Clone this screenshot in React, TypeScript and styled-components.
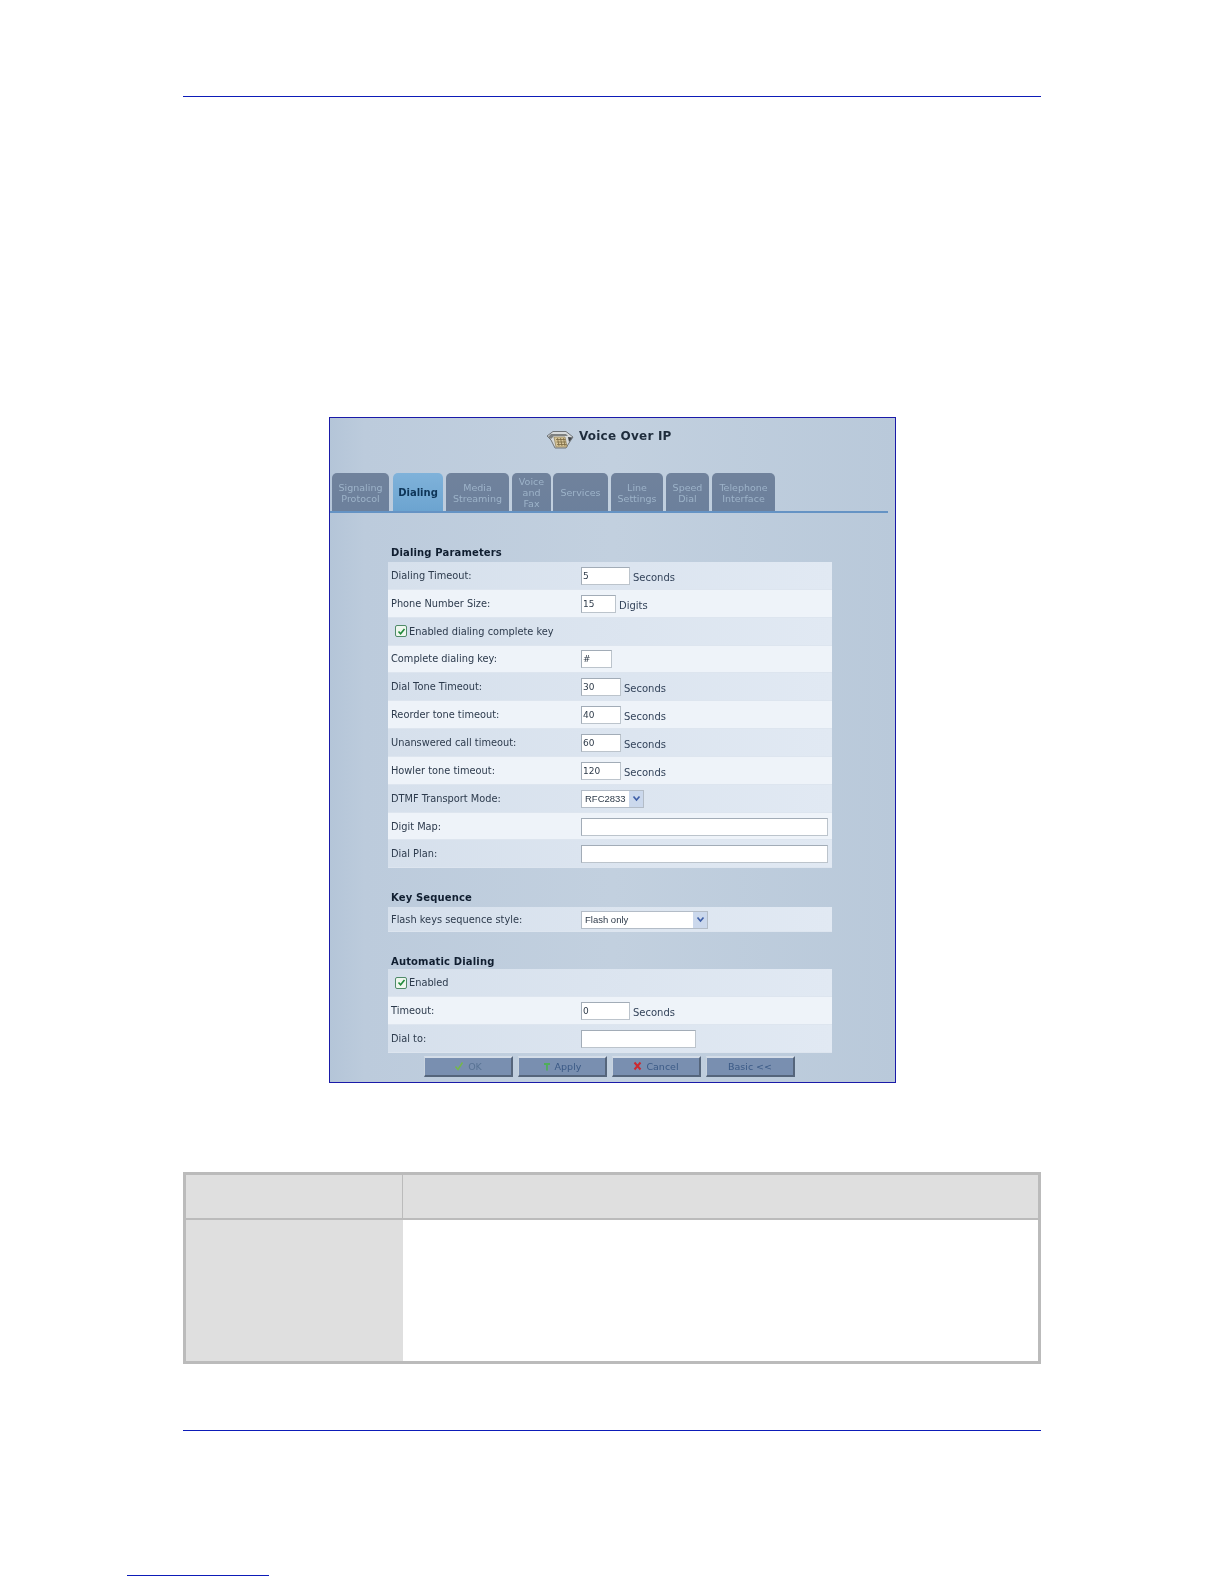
import React from "react";
import styled, { createGlobalStyle } from "styled-components";

const Global = createGlobalStyle`
  html, body { margin: 0; padding: 0; background: #fff; }
  body { font-family: "DejaVu Sans", Verdana, sans-serif; }
`;

const Page = styled.div`
  width: 1224px;
  height: 1584px;
  position: relative;
  overflow: hidden;
  padding-top: 96px;
  box-sizing: border-box;
`;

const Rule = styled.div`
  height: 1px;
  width: 858px;
  margin-left: 183px;
  background: #0d1cb8;
`;

const Frame = styled.div`
  box-sizing: border-box;
  width: 567px;
  height: 666px;
  margin: 320px 0 0 329px;
  border: 1px solid #1a1aa8;
  background: linear-gradient(90deg, #b4c5d8 0%, #bccbdc 6%, #c2d0df 50%, #b9c9da 100%);
  display: flex;
  flex-direction: column;
`;

const Blur = styled.div`
  filter: blur(0.45px);
  display: flex;
  flex-direction: column;
  height: 100%;
`;

const TitleRow = styled.div`
  height: 55px;
  padding-left: 216px;
  box-sizing: border-box;
  padding-top: 4px;
  display: flex;
  align-items: flex-start;
  gap: 5px;
`;

const TitleIcon = styled.svg`
  width: 28px;
  height: 19px;
  margin-top: 8px;
`;

const TitleText = styled.span`
  font-size: 12px;
  font-weight: 700;
  color: #1e2c3c;
  line-height: 28px;
  letter-spacing: 0.2px;
`;

const TabStrip = styled.div`
  width: 558px;
  height: 40px;
  box-sizing: border-box;
  padding-left: 2px;
  display: flex;
  border-bottom: 2px solid #6593c4;
`;

const Tab = styled.div<{ $w: number; $gap: number; $active?: boolean }>`
  width: ${(p) => p.$w}px;
  margin-right: ${(p) => p.$gap}px;
  height: 38px;
  box-sizing: border-box;
  padding-top: 1px;
  border-radius: 5px 5px 0 0;
  background: ${(p) => (p.$active ? "linear-gradient(#7fb2da, #6ca4d0)" : "linear-gradient(#70829c, #6c809c)")};
  color: ${(p) => (p.$active ? "#0e3558" : "#9db3c9")};
  font-size: ${(p) => (p.$active ? 10 : 9.5)}px;
  font-weight: ${(p) => (p.$active ? 700 : 400)};
  line-height: 11px;
  text-align: center;
  display: flex;
  align-items: center;
  justify-content: center;
  overflow: hidden;
`;

const Content = styled.div`
  padding-left: 58px;
  width: 444px;
  display: flex;
  flex-direction: column;
`;

const Heading = styled.div<{ $h: number; $pb?: number }>`
  height: ${(p) => p.$h}px;
  box-sizing: border-box;
  padding: 0 0 ${(p) => p.$pb ?? 3}px 3px;
  display: flex;
  align-items: flex-end;
  font-size: 10px;
  font-weight: 700;
  color: #101e30;
  line-height: 12px;
  letter-spacing: 0.15px;
`;

const Row = styled.div<{ $alt?: boolean; $h?: number }>`
  height: ${(p) => p.$h ?? 27.85}px;
  box-sizing: border-box;
  display: flex;
  align-items: center;
  padding-left: 3px;
  background: ${(p) => (p.$alt ? "linear-gradient(90deg, #d6e0ec, #e1e9f3)" : "#eef3f9")};
  border-bottom: 1px solid #dde5ef;
`;

const Label = styled.div`
  width: 190px;
  font-size: 9.8px;
  color: #2c3a4c;
`;

const Field = styled.div<{ $w: number }>`
  width: ${(p) => p.$w}px;
  height: 18px;
  margin-top: 1px;
  box-sizing: border-box;
  background: #fff;
  border: 1px solid #a2acb7;
  border-right-color: #bcc4cc;
  border-bottom-color: #bcc4cc;
  padding-left: 1px;
  font-size: 9px;
  line-height: 16px;
  color: #2e3b4a;
`;

const Unit = styled.span`
  font-size: 10px;
  color: #33435a;
  margin: 4px 0 0 3px;
`;

const SelectBox = styled.div<{ $w: number }>`
  width: ${(p) => p.$w}px;
  height: 18px;
  margin-top: 1px;
  box-sizing: border-box;
  background: #fff;
  border: 1px solid #b3bcc7;
  padding-left: 3px;
  font-family: "Liberation Sans", Arial, sans-serif;
  font-size: 9.5px;
  line-height: 16px;
  color: #2e3b4a;
  display: flex;
  justify-content: space-between;
  align-items: center;
`;

const SelectArrow = styled.span`
  width: 14px;
  height: 16px;
  background: #cbd8ec;
  display: flex;
  align-items: center;
  justify-content: center;
`;

const CheckLabel = styled.div`
  display: flex;
  align-items: center;
  gap: 2px;
  padding-left: 4px;
  font-size: 9.8px;
  color: #2c3a4c;
`;

const Check = styled.span`
  width: 12px;
  height: 12px;
  box-sizing: border-box;
  border: 1px solid #4f8a68;
  border-radius: 2px;
  background: #eef6ee;
  display: flex;
  align-items: center;
  justify-content: center;
`;

const ButtonBar = styled.div`
  display: flex;
  gap: 5px;
  padding: 3px 0 0 94px;
`;

const Button = styled.div<{ $light?: boolean }>`
  width: 89px;
  height: 21px;
  box-sizing: border-box;
  background: #798fb0;
  border-top: 2px solid #d4dde8;
  border-left: 1px solid #c8d3df;
  border-right: 2px solid #55657b;
  border-bottom: 2px solid #55657b;
  color: ${(p) => (p.$light ? "#587394" : "#3b5a86")};
  font-size: 9.5px;
  display: flex;
  align-items: center;
  justify-content: center;
  gap: 4px;
`;

const InfoTable = styled.div`
  box-sizing: border-box;
  width: 858px;
  height: 192px;
  margin: 89px 0 0 183px;
  border: 3px solid #bbbbbb;
  display: grid;
  grid-template-columns: 217px 1fr;
  grid-template-rows: 45px 1fr;
`;

const HeadCell = styled.div<{ $first?: boolean }>`
  background: #dfdfdf;
  border-bottom: 2px solid #bbbbbb;
  border-right: ${(p) => (p.$first ? "1px solid #bbbbbb" : "none")};
`;

const SideCell = styled.div`
  background: #dfdfdf;
`;

const BodyCell = styled.div`
  background: #fff;
`;

const BottomRule = styled(Rule)`
  margin-top: 66px;
`;

const Footnote = styled.div`
  height: 1px;
  width: 142px;
  margin: 144px 0 0 127px;
  background: #0d1cb8;
`;

const PhoneIcon = () => (
  <TitleIcon viewBox="0 0 28 19">
    <path d="M1 6 L7 1.5 H20 L27 7 L23 13 L20 18 H9 L5 10 Z" fill="#d7dadb" stroke="#6f7478" strokeWidth="1" />
    <path d="M5 4 H20 L22 6 H8 L5 9 L2 7 Z" fill="#7f8282" />
    <path d="M8 7 H19 L21 17 H10 Z" fill="#d8c69a" stroke="#8c7c54" strokeWidth="0.7" />
    <path d="M10 9.5 H19.5 M10.5 12 H20 M11 14.5 H20.5 M11.5 8 L13 16 M14.5 8 L16 16 M17.5 8 L19 16" stroke="#7b6a42" strokeWidth="0.8" />
    <path d="M22 7 L26.5 7.5 L23 12 Z" fill="#3f444a" />
  </TitleIcon>
);

const CheckMark = () => (
  <svg width="9" height="9" viewBox="0 0 9 9">
    <path d="M1.5 4.5 L3.6 6.8 L7.5 2" fill="none" stroke="#1f8a3a" strokeWidth="1.6" />
  </svg>
);

const Arrow = () => (
  <svg width="9" height="7" viewBox="0 0 9 7">
    <path d="M1.5 1.5 L4.5 5 L7.5 1.5" fill="none" stroke="#3f5fa8" strokeWidth="1.7" />
  </svg>
);

const tabs: { t: React.ReactNode; w: number; g: number; a?: boolean }[] = [
  { t: <>Signaling<br />Protocol</>, w: 57, g: 4 },
  { t: "Dialing", w: 50, g: 3, a: true },
  { t: <>Media<br />Streaming</>, w: 63, g: 3 },
  { t: <>Voice<br />and<br />Fax</>, w: 39, g: 2 },
  { t: "Services", w: 55, g: 3 },
  { t: <>Line<br />Settings</>, w: 52, g: 3 },
  { t: <>Speed<br />Dial</>, w: 43, g: 3 },
  { t: <>Telephone<br />Interface</>, w: 63, g: 0 },
];

const InputRow = ({ label, value = "", w, unit, alt }: { label: string; value?: string; w: number; unit?: string; alt?: boolean }) => (
  <Row $alt={alt}>
    <Label>{label}</Label>
    <Field $w={w}>{value}</Field>
    {unit && <Unit>{unit}</Unit>}
  </Row>
);

const SelectRow = ({ label, value, w, alt, h }: { label: string; value: string; w: number; alt?: boolean; h?: number }) => (
  <Row $alt={alt} $h={h}>
    <Label>{label}</Label>
    <SelectBox $w={w}>
      {value}
      <SelectArrow><Arrow /></SelectArrow>
    </SelectBox>
  </Row>
);

const CheckRow = ({ label, alt }: { label: string; alt?: boolean }) => (
  <Row $alt={alt}>
    <CheckLabel>
      <Check><CheckMark /></Check>
      {label}
    </CheckLabel>
  </Row>
);

export default function App() {
  return (
    <Page>
      <Global />
      <Rule />
      <Frame>
        <Blur>
          <TitleRow>
            <PhoneIcon />
            <TitleText>Voice Over IP</TitleText>
          </TitleRow>
          <TabStrip>
            {tabs.map((x, i) => (
              <Tab key={i} $w={x.w} $gap={x.g} $active={x.a}>
                <span>{x.t}</span>
              </Tab>
            ))}
          </TabStrip>
          <Content>
            <Heading $h={49}>Dialing Parameters</Heading>
            <InputRow alt label="Dialing Timeout:" value="5" w={49} unit="Seconds" />
            <InputRow label="Phone Number Size:" value="15" w={35} unit="Digits" />
            <CheckRow alt label="Enabled dialing complete key" />
            <InputRow label="Complete dialing key:" value="#" w={31} />
            <InputRow alt label="Dial Tone Timeout:" value="30" w={40} unit="Seconds" />
            <InputRow label="Reorder tone timeout:" value="40" w={40} unit="Seconds" />
            <InputRow alt label="Unanswered call timeout:" value="60" w={40} unit="Seconds" />
            <InputRow label="Howler tone timeout:" value="120" w={40} unit="Seconds" />
            <SelectRow alt label="DTMF Transport Mode:" value="RFC2833" w={63} />
            <InputRow label="Digit Map:" w={247} />
            <InputRow alt label="Dial Plan:" w={247} />
            <Heading $h={39}>Key Sequence</Heading>
            <SelectRow alt label="Flash keys sequence style:" value="Flash only" w={127} h={25} />
            <Heading $h={37} $pb={1}>Automatic Dialing</Heading>
            <CheckRow alt label="Enabled" />
            <InputRow label="Timeout:" value="0" w={49} unit="Seconds" />
            <InputRow alt label="Dial to:" w={115} />
          </Content>
          <ButtonBar>
            <Button $light>
              <svg width="10" height="10" viewBox="0 0 10 10"><path d="M1.5 5.5 L4 8.5 L8.5 1.5" fill="none" stroke="#74b84a" strokeWidth="1.4" /></svg>
              OK
            </Button>
            <Button>
              <svg width="8" height="10" viewBox="0 0 8 10"><path d="M4 9.5 V3 M1 3 H7" fill="none" stroke="#4fae5a" strokeWidth="1.8" /></svg>
              Apply
            </Button>
            <Button>
              <svg width="9" height="10" viewBox="0 0 9 10"><path d="M1.5 1.5 L7.5 8.5 M7.5 1.5 L1.5 8.5" fill="none" stroke="#cc2a30" strokeWidth="2" /></svg>
              Cancel
            </Button>
            <Button>Basic &lt;&lt;</Button>
          </ButtonBar>
        </Blur>
      </Frame>
      <InfoTable>
        <HeadCell $first />
        <HeadCell />
        <SideCell />
        <BodyCell />
      </InfoTable>
      <BottomRule />
      <Footnote />
    </Page>
  );
}
